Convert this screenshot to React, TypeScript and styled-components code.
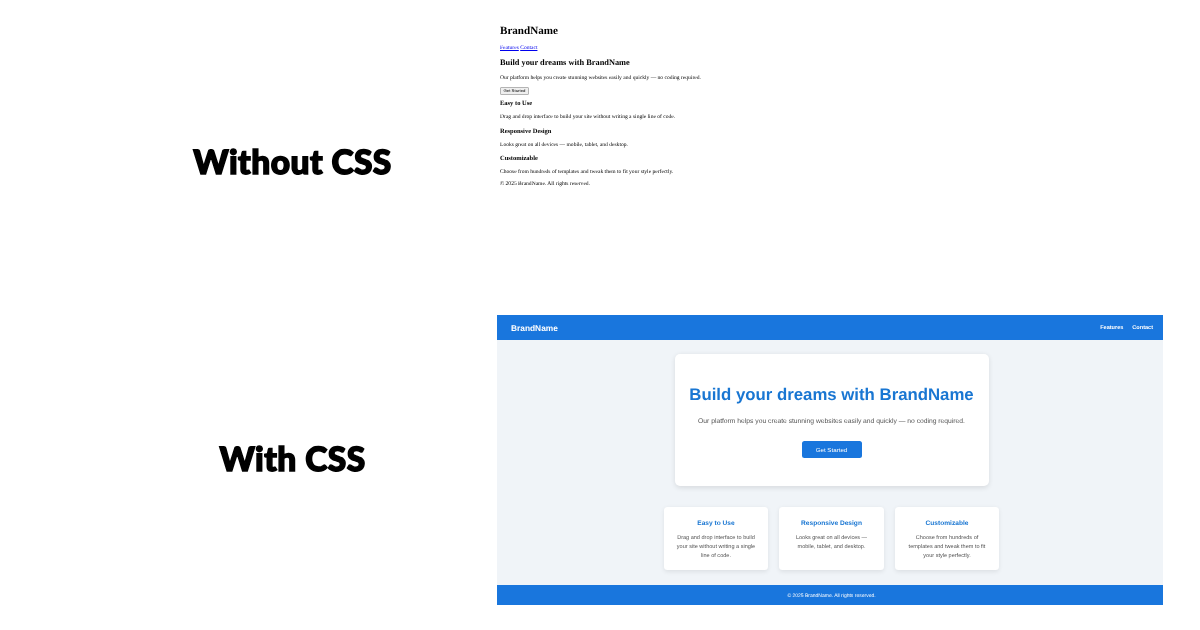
import React from "react";
import styled, { createGlobalStyle } from "styled-components";

const Global = createGlobalStyle`
  html, body { margin: 0; padding: 0; background: #fff; }
  body { width: 1200px; height: 630px; overflow: hidden; text-rendering: geometricPrecision; }
`;

const Page = styled.div`
  display: grid;
  grid-template-columns: 497px 666px;
  grid-template-rows: 315px 290px;
  width: 1200px;
  height: 630px;
`;

const LabelCell = styled.div<{ $pt: number }>`
  display: flex;
  align-items: center;
  justify-content: center;
  padding-left: 88px;
  padding-top: ${(p) => p.$pt}px;
`;

const Label = styled.h2`
  margin: 0;
  font: 900 33.5px/1 Lato, sans-serif;
  color: #000;
  -webkit-text-stroke: 1.5px #000;
  letter-spacing: 0.45px;
  white-space: nowrap;
  filter: blur(0.35px);
`;

/* Unstyled document */
const Plain = styled.div`
  padding: 23.5px 0 0 3px;
  font: 5.55px/7px "Liberation Serif", serif;
  color: #000;
  filter: blur(0.35px);
`;
const PlainBrand = styled.h1`
  margin: 0 0 6px;
  font: bold 11.1px/15px "Liberation Serif", serif;
`;
const PlainLinks = styled.nav`
  margin-bottom: 6.5px;
  a { color: #0000ee; text-decoration: underline; margin-right: 1.4px; }
`;
const PlainTitle = styled.h2`
  margin: 0 0 6.5px;
  font: bold 8.33px/10px "Liberation Serif", serif;
`;
const PlainText = styled.p`
  margin: 0 0 5px;
`;
const PlainButton = styled.button`
  display: block;
  box-sizing: border-box;
  width: 29px;
  height: 8px;
  margin: 0 0 -1px;
  padding: 0;
  background: #efefef;
  border: 1px solid #b4b4b4;
  border-radius: 1px;
  font: 4.3px/6px "Liberation Sans", sans-serif;
  color: #000;
`;
const PlainHeading = styled.h3`
  margin: 6.5px 0 7px;
  font: bold 6.5px/7px "Liberation Serif", serif;
`;

/* Styled document */
const Styled = styled.div`
  display: flex;
  flex-direction: column;
  background: #f0f4f8;
  font-family: "Liberation Sans", Arial, sans-serif;
  filter: blur(0.3px);
`;
const NavBar = styled.header`
  display: flex;
  align-items: center;
  justify-content: space-between;
  box-sizing: border-box;
  height: 25px;
  padding: 0 10px 0 14px;
  background: #1976dd;
  color: #fff;
`;
const Brand = styled.div`
  font-weight: 700;
  font-size: 8.35px;
`;
const NavLinks = styled.nav`
  display: flex;
  gap: 9px;
  font-weight: 700;
  font-size: 5.55px;
`;
const Main = styled.main`
  flex: 1;
  display: flex;
  flex-direction: column;
  align-items: center;
  padding: 14px 0 0 3px;
`;
const Hero = styled.section`
  display: flex;
  flex-direction: column;
  align-items: center;
  box-sizing: border-box;
  width: 314px;
  height: 132px;
  padding-top: 30px;
  background: #fff;
  border-radius: 5px;
  box-shadow: 0 1.5px 5px rgba(0, 0, 0, 0.1);
`;
const HeroTitle = styled.h1`
  margin: 0 0 11px;
  font-size: 16.8px;
  line-height: 22px;
  font-weight: 700;
  color: #1976d2;
  white-space: nowrap;
`;
const HeroText = styled.p`
  margin: 0 0 14px;
  font-size: 6.74px;
  line-height: 10px;
  color: #555;
  white-space: nowrap;
`;
const HeroButton = styled.button`
  width: 60px;
  height: 17px;
  padding: 0;
  border: 0;
  border-radius: 2.5px;
  background: #1976dd;
  color: #fff;
  font: 6.2px "Liberation Sans", Arial, sans-serif;
`;
const Features = styled.section`
  display: flex;
  gap: 11px;
  margin-top: 21px;
`;
const Card = styled.article`
  box-sizing: border-box;
  width: 104.5px;
  height: 63px;
  padding: 12px 9px 0;
  text-align: center;
  background: #fff;
  border-radius: 3.5px;
  box-shadow: 0 1.5px 4px rgba(0, 0, 0, 0.08);
`;
const CardTitle = styled.h3`
  margin: 0 0 5px;
  font-size: 6.6px;
  line-height: 10px;
  font-weight: 700;
  color: #1976d2;
  white-space: nowrap;
`;
const CardText = styled.p`
  margin: 0;
  font-size: 5.55px;
  line-height: 9px;
  color: #555;
`;
const Footer = styled.footer`
  display: flex;
  align-items: center;
  justify-content: center;
  height: 20px;
  padding: 1px 0 0 3px;
  box-sizing: border-box;
  background: #1976dd;
  color: #fff;
  font-size: 5px;
`;

const features = [
  { title: "Easy to Use", text: "Drag and drop interface to build your site without writing a single line of code." },
  { title: "Responsive Design", text: "Looks great on all devices — mobile, tablet, and desktop." },
  { title: "Customizable", text: "Choose from hundreds of templates and tweak them to fit your style perfectly." },
];

export default function App() {
  return (
    <>
      <Global />
      <Page>
        <LabelCell $pt={10}>
          <Label>Without CSS</Label>
        </LabelCell>
        <Plain>
          <PlainBrand>BrandName</PlainBrand>
          <PlainLinks>
            <a href="#features">Features</a>
            <a href="#contact">Contact</a>
          </PlainLinks>
          <PlainTitle>Build your dreams with BrandName</PlainTitle>
          <PlainText>Our platform helps you create stunning websites easily and quickly — no coding required.</PlainText>
          <PlainButton>Get Started</PlainButton>
          {features.map((f) => (
            <React.Fragment key={f.title}>
              <PlainHeading>{f.title}</PlainHeading>
              <PlainText>{f.text}</PlainText>
            </React.Fragment>
          ))}
          <PlainText>© 2025 BrandName. All rights reserved.</PlainText>
        </Plain>
        <LabelCell $pt={0}>
          <Label>With CSS</Label>
        </LabelCell>
        <Styled>
          <NavBar>
            <Brand>BrandName</Brand>
            <NavLinks>
              <span>Features</span>
              <span>Contact</span>
            </NavLinks>
          </NavBar>
          <Main>
            <Hero>
              <HeroTitle>Build your dreams with BrandName</HeroTitle>
              <HeroText>Our platform helps you create stunning websites easily and quickly — no coding required.</HeroText>
              <HeroButton>Get Started</HeroButton>
            </Hero>
            <Features>
              {features.map((f) => (
                <Card key={f.title}>
                  <CardTitle>{f.title}</CardTitle>
                  <CardText>{f.text}</CardText>
                </Card>
              ))}
            </Features>
          </Main>
          <Footer>© 2025 BrandName. All rights reserved.</Footer>
        </Styled>
      </Page>
    </>
  );
}
